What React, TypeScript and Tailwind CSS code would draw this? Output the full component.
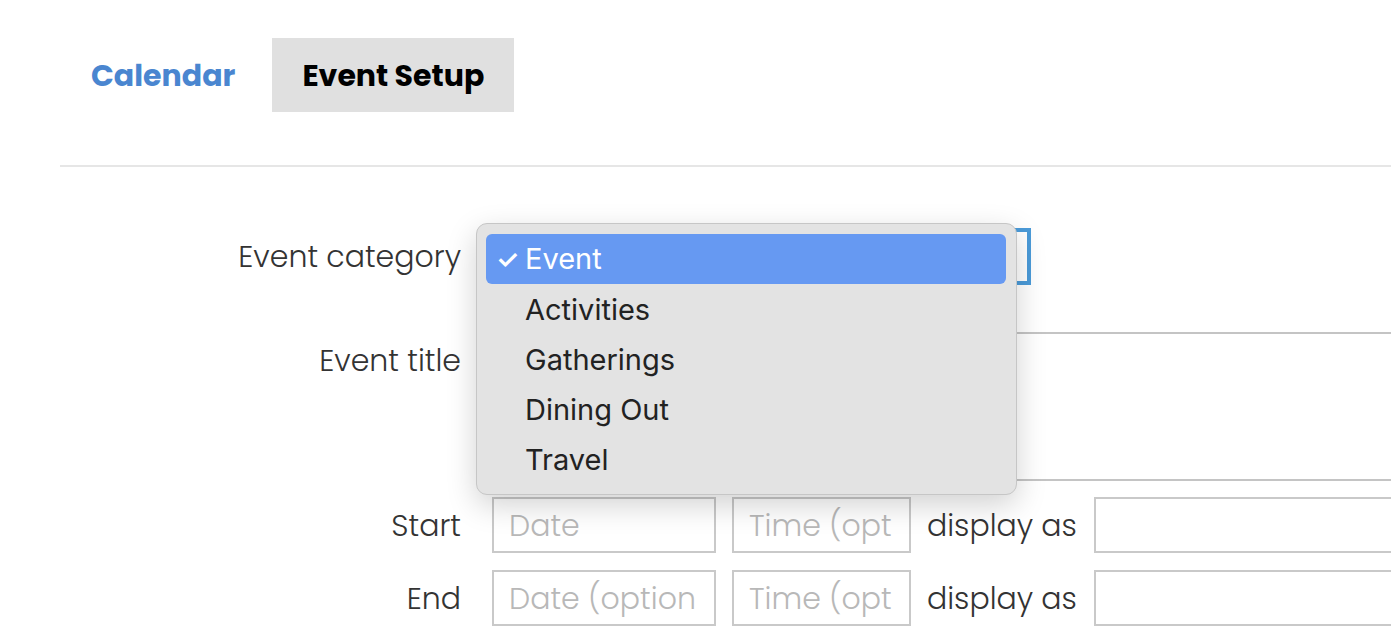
import React from "react";

const poppins = { fontFamily: 'Poppins, Inter, "Open Sans", sans-serif' } as React.CSSProperties;

export default function App() {
  const items = ["Event", "Activities", "Gatherings", "Dining Out", "Travel"];
  return (
    <div
      className="relative w-[1391px] h-[642px] overflow-hidden bg-white"
      style={poppins}
    >
      {/* Tabs */}
      <div className="flex gap-[6px] pt-[38px] pl-[60px]">
        <div className="h-[74px] px-[31px] flex items-center text-[30px] font-bold text-[#4a86d0]">
          Calendar
        </div>
        <div className="h-[74px] px-[30px] flex items-center text-[30px] font-bold text-black bg-[#e0e0e0]">
          Event Setup
        </div>
      </div>
      <div className="mt-[53px] ml-[60px] h-[2px] bg-[#e6e6e6]" />

      {/* Form */}
      <div className="pl-[60px] text-[30px] font-light text-[#333]">
        <div className="mt-[61px] flex">
          <div className="w-[401px] flex-none text-right leading-[58px] whitespace-nowrap">Event category</div>
          <div className="ml-[27px] w-[543px] h-[57px] flex-none border-[4px] border-[#4b9bd9] bg-white flex items-center justify-end pr-[10px]">
            <span className="w-[3px] h-[3px] bg-[#333] rounded-full" />
          </div>
        </div>
        <div className="mt-[46px] flex">
          <div className="w-[401px] flex-none text-right leading-[58px] whitespace-nowrap">Event title</div>
          <div className="ml-[31px] w-[1000px] h-[149px] flex-none border-2 border-[#c4c4c4]" />
        </div>
        <div className="mt-[16px] flex items-center gap-[16px] h-[56px]">
          <div className="w-[401px] h-[56px] flex-none text-right leading-[58px] mr-[15px]">Start</div>
          <div className="w-[224px] h-[56px] flex-none border-2 border-[#c9c9c9] pl-[15px] leading-[53px] text-[#b8b8b8] overflow-hidden whitespace-nowrap">Date</div>
          <div className="w-[179px] h-[56px] flex-none border-2 border-[#c9c9c9] pl-[15px] leading-[53px] text-[#b8b8b8] overflow-hidden whitespace-nowrap">Time (opt</div>
          <div className="w-[151px] h-[56px] flex-none whitespace-nowrap text-[#333] leading-[57px]">display as</div>
          <div className="w-[400px] h-[56px] flex-none border-2 border-[#c9c9c9]" />
        </div>
        <div className="mt-[17px] flex items-center gap-[16px] h-[56px]">
          <div className="w-[401px] h-[56px] flex-none text-right leading-[58px] mr-[15px]">End</div>
          <div className="w-[224px] h-[56px] flex-none border-2 border-[#c9c9c9] pl-[15px] leading-[53px] text-[#b8b8b8] overflow-hidden whitespace-nowrap">Date (option</div>
          <div className="w-[179px] h-[56px] flex-none border-2 border-[#c9c9c9] pl-[15px] leading-[53px] text-[#b8b8b8] overflow-hidden whitespace-nowrap">Time (opt</div>
          <div className="w-[151px] h-[56px] flex-none whitespace-nowrap text-[#333] leading-[57px]">display as</div>
          <div className="w-[400px] h-[56px] flex-none border-2 border-[#c9c9c9]" />
        </div>
      </div>

      {/* Dropdown menu overlay */}
      <div
        className="absolute left-[476px] top-[223px] w-[541px] h-[272px] rounded-[11px] bg-[#e3e3e3] border border-[#c6c6c6] shadow-[0_10px_30px_rgba(0,0,0,0.18)] pt-[10px] pl-[9px] pr-[10px]"
        style={{ fontFamily: 'Inter, Roboto, "Liberation Sans", sans-serif' }}
      >
        {items.map((it, i) => (
          <div
            key={it}
            className={
              i === 0
                ? "relative h-[50px] rounded-[6px] bg-[#6699f2] text-white flex items-center pl-[39px] text-[29px]"
                : "relative h-[50px] text-[#222] flex items-center pl-[39px] pt-[1px] text-[29px]"
            }
          >
            {i === 0 && <span className="absolute left-[10px] text-[26px] font-semibold">✓</span>}
            {it}
          </div>
        ))}
      </div>
    </div>
  );
}
